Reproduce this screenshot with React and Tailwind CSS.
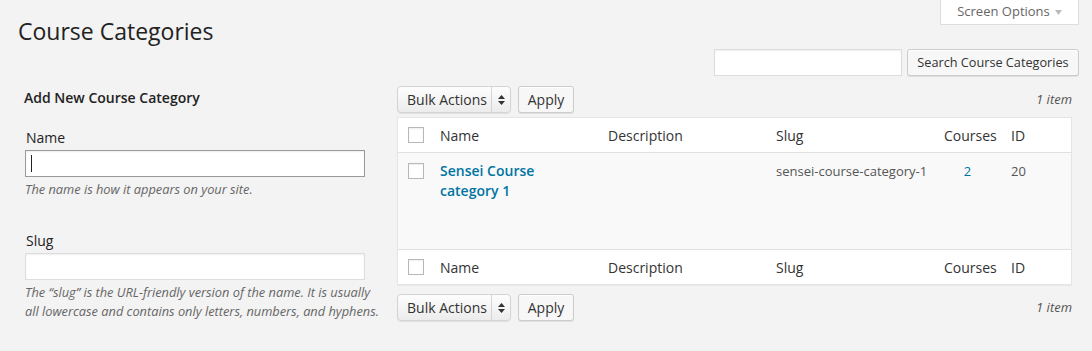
import { useState } from 'react';

const columns = [
  { key: 'name', label: 'Name', width: 'w-[168px]' },
  { key: 'description', label: 'Description', width: 'w-[168px]' },
  { key: 'slug', label: 'Slug', width: 'w-[168px]' },
  { key: 'courses', label: 'Courses', width: 'w-[67px]' },
  { key: 'id', label: 'ID', width: 'flex-1' },
];

function Checkbox() {
  return <span className="block w-4 h-4 bg-white border border-[#b4b9be] shadow-[inset_0_1px_2px_rgba(0,0,0,0.07)]" />;
}

function BulkActions() {
  return (
    <div className="flex items-center gap-[7px]">
      <div className="flex items-stretch h-[27px] w-[114px] rounded-[4px] border border-[#d4d4d4] bg-linear-to-b from-[#fdfdfd] to-[#ececec] shadow-[0_1px_1px_rgba(0,0,0,0.08)]">
        <span className="flex-1 pl-[9px] text-[14px] leading-[25px] text-[#333]">Bulk Actions</span>
        <span className="w-[19px] border-l border-[#d4d4d4] flex flex-col items-center justify-center gap-[2px]">
          <svg width="7" height="4" viewBox="0 0 7 4"><path d="M0 4 L3.5 0 L7 4 Z" fill="#333" /></svg>
          <svg width="7" height="4" viewBox="0 0 7 4"><path d="M0 0 L3.5 4 L7 0 Z" fill="#333" /></svg>
        </span>
      </div>
      <button className="h-[27px] w-[56px] rounded-[3px] border border-[#cccccc] bg-[#f7f7f7] text-[14px] text-[#333] shadow-[inset_0_1px_0_#fff,0_1px_0_rgba(0,0,0,0.08)] leading-[25px]">
        Apply
      </button>
    </div>
  );
}

function HeaderRow({ bottom }) {
  return (
    <div className={`flex items-center h-[35px] bg-white ${bottom ? 'border-t' : 'border-b'} border-[#e1e1e1]`}>
      <div className="w-[32px] pl-[10px]"><Checkbox /></div>
      {columns.map(c => (
        <div key={c.key} className={`${c.width} pl-[10px] text-[14px] text-[#333]`}>{c.label}</div>
      ))}
    </div>
  );
}

export default function App() {
  const [name, setName] = useState('');
  const [slug, setSlug] = useState('');

  return (
    <div className="relative min-h-[351px] bg-[#f3f3f3] font-['Open_Sans',sans-serif] text-[#222]">
      {/* Screen Options tab */}
      <div className="absolute top-0 right-[13px] w-[139px] h-[25px] bg-white border border-t-0 border-[#dddddd] flex items-center justify-center gap-[5px] text-[13px] text-[#666]">
        Screen Options
        <svg width="7" height="5" viewBox="0 0 7 5"><path d="M0 0 L7 0 L3.5 5 Z" fill="#bbb" /></svg>
      </div>

      <h1 className="pl-[18px] pt-[17px] text-[23px] leading-[29px] font-normal text-[#222]">Course Categories</h1>

      {/* Search */}
      <div className="flex justify-end gap-[5px] pr-[13px] mt-[3px]">
        <input className="w-[188px] h-[27px] bg-white border border-[#dddddd] shadow-[inset_0_1px_2px_rgba(0,0,0,0.07)] outline-none" />
        <button className="h-[27px] w-[172px] rounded-[3px] border border-[#cccccc] bg-[#f7f7f7] text-[12.7px] text-[#333] shadow-[inset_0_1px_0_#fff,0_1px_0_rgba(0,0,0,0.08)]">
          Search Course Categories
        </button>
      </div>

      <div className="flex mt-[10px] pr-[20px]">
        {/* Add new form */}
        <div className="w-[397px] flex-none pl-[24px] pr-[4px]">
          <h3 className="text-[14px] leading-[24px] font-semibold text-[#222]">Add New Course Category</h3>

          <label className="block mt-[18px] ml-[2px] text-[14px] leading-[20px] text-[#222]">Name</label>
          <div className="relative mt-[2px] w-[341px]">
            <input value={name} onChange={e => setName(e.target.value)}
              className="block w-[340px] h-[27px] ml-[1px] bg-white border border-[#999999] shadow-[inset_0_1px_2px_rgba(0,0,0,0.07)] outline-none" />
            <span className="absolute left-[7px] top-[5px] w-px h-[17px] bg-[#222]" />
          </div>
          <p className="mt-[3px] ml-[1px] text-[12.8px] leading-[19px] italic text-[#666]">The name is how it appears on your site.</p>

          <label className="block mt-[32px] ml-[2px] text-[14px] leading-[20px] text-[#222]">Slug</label>
          <input value={slug} onChange={e => setSlug(e.target.value)}
            className="block mt-[2px] ml-[1px] w-[340px] h-[27px] bg-white border border-[#dddddd] shadow-[inset_0_1px_2px_rgba(0,0,0,0.07)] outline-none" />
          <p className="mt-[3px] ml-[1px] w-[358px] text-[12.8px] leading-[19px] italic text-[#666]">
            The “slug” is the URL-friendly version of the name. It is usually all lowercase and contains only letters, numbers, and hyphens.
          </p>
        </div>

        {/* List table */}
        <div className="flex-1">
          <div className="flex items-center justify-between">
            <BulkActions />
            <span className="text-[13px] italic text-[#555]">1 item</span>
          </div>

          <div className="mt-[4px] border border-[#e5e5e5] shadow-[0_1px_1px_rgba(0,0,0,0.04)]">
            <HeaderRow />
            <div className="flex items-start h-[96px] bg-[#f9f9f9] pt-[8px]">
              <div className="w-[32px] pl-[10px] pt-[2px]"><Checkbox /></div>
              <div className="w-[168px] pl-[10px] pr-[40px] text-[14px] leading-[20px] font-semibold text-[#0074a2]">
                Sensei Course category 1
              </div>
              <div className="w-[168px]" />
              <div className="w-[168px] pl-[10px] text-[13px] leading-[20px] text-[#555]">sensei-course-category-1</div>
              <div className="w-[67px] text-center text-[13px] leading-[20px] text-[#0074a2]">2</div>
              <div className="flex-1 pl-[10px] text-[13px] leading-[20px] text-[#555]">20</div>
            </div>
            <HeaderRow bottom />
          </div>

          <div className="flex items-center justify-between mt-[9px]">
            <BulkActions />
            <span className="text-[13px] italic text-[#555]">1 item</span>
          </div>
        </div>
      </div>
    </div>
  );
}
